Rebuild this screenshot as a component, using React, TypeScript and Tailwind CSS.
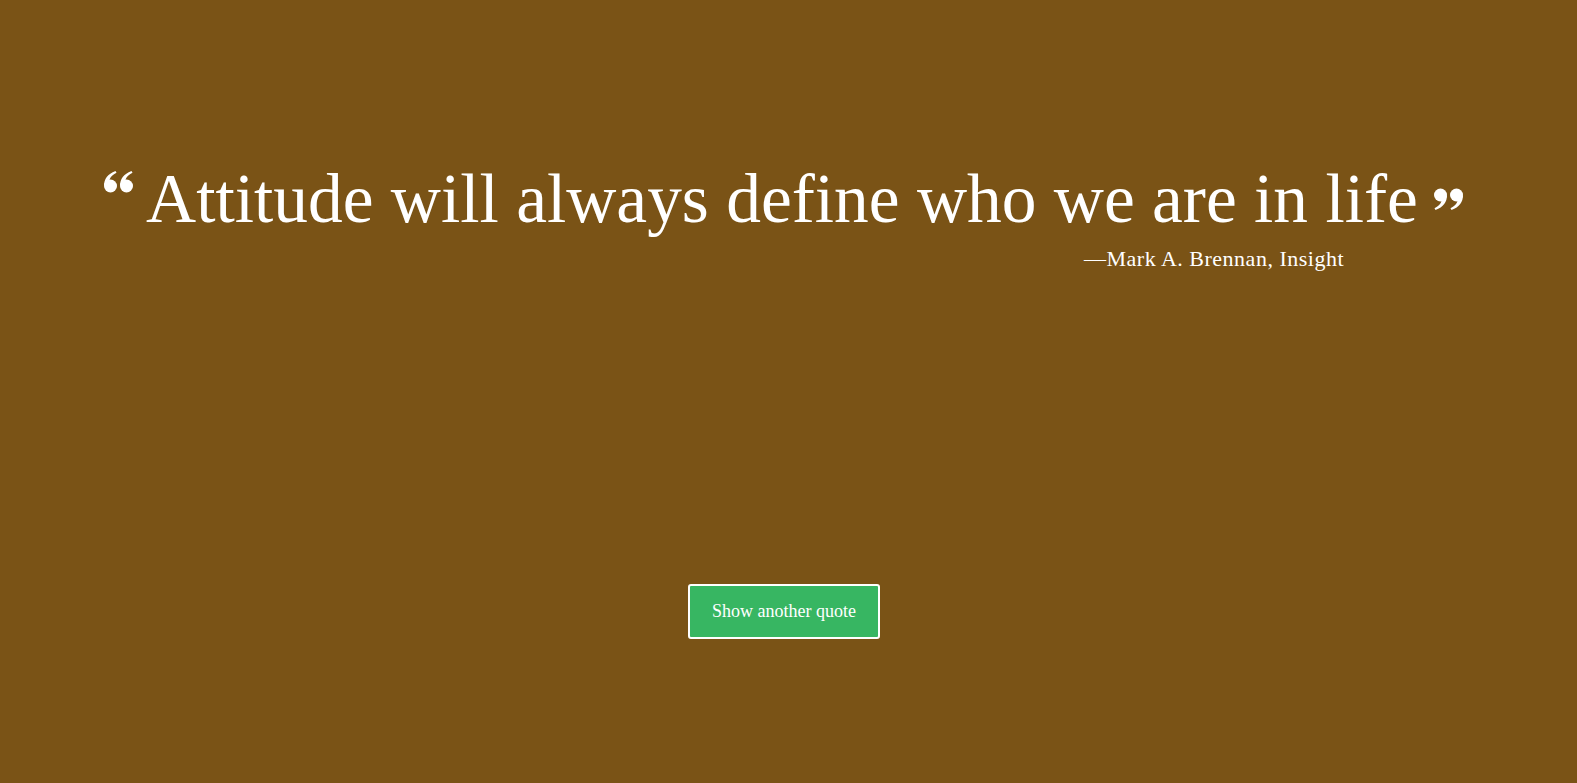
import React from "react";

const quote = {
  text: "Attitude will always define who we are in life",
  author: "Mark A. Brennan, Insight",
};

// one teardrop quote mark, ball at the bottom
const Mark = ({ x }: { x: number }) => (
  <g transform={`translate(${x} 0)`}>
    <circle cx="6.5" cy="15" r="6.5" />
    <path d="M0 15 C0 8 3.5 3 11.5 0 L12.5 1.8 C7.5 4.3 5.6 7.2 5.6 9.5 Z" />
  </g>
);

const QuoteMarks = ({ flip }: { flip?: boolean }) => (
  <svg
    width="30"
    height="22"
    viewBox="0 0 30 22"
    fill="currentColor"
    className={flip ? "rotate-180" : ""}
  >
    <Mark x={0} />
    <Mark x={16} />
  </svg>
);

export default function App() {
  return (
    <div className="min-h-[783px] w-full bg-[#7a5316] text-white font-['Liberation_Serif',serif]">
      <div className="flex flex-col pt-[154px]">
        {/* quote line */}
        <div className="flex items-start justify-center pr-[10px]">
          <span className="mt-[17px] mr-[12px]">
            <QuoteMarks />
          </span>
          <h1 className="text-[69.4px] leading-[90px]">{quote.text}</h1>
          <span className="mt-[34px] ml-[15px]">
            <QuoteMarks flip />
          </span>
        </div>
        <div className="flex justify-end pr-[233px]">
          <p className="text-[22px] leading-[30px] tracking-[0.5px]">—{quote.author}</p>
        </div>
      </div>

      <div className="mt-[310px] flex justify-center pr-[9px]">
        <button className="h-[55px] w-[192px] rounded-[3px] border-2 border-white bg-[#37b662] text-[18px] text-white">
          Show another quote
        </button>
      </div>
    </div>
  );
}
